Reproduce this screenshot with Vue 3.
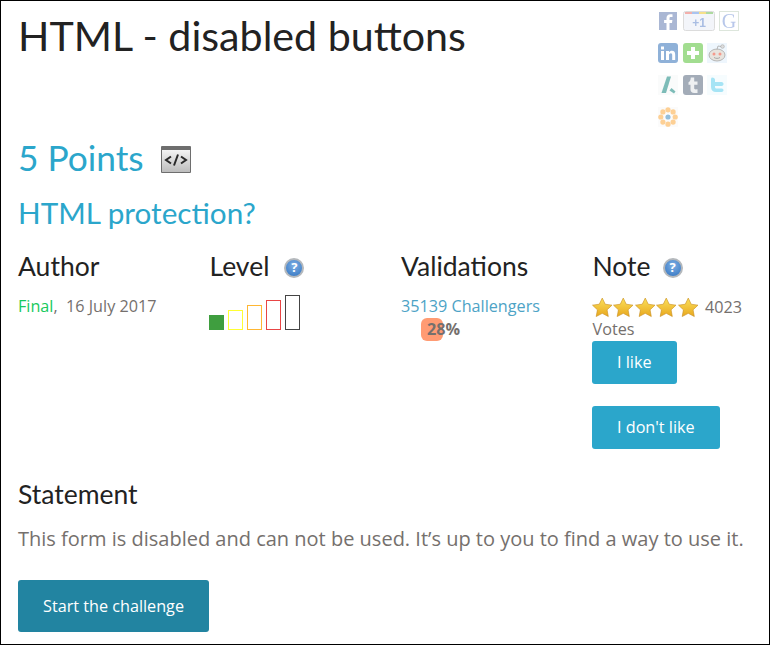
<script setup>
const columnsLevel = [
  { h: 20, c: "#ffff33" },
  { h: 25, c: "#ffb733" },
  { h: 30, c: "#e84545" },
  { h: 35, c: "#444" },
];
</script>

<template>
  <div class="page">
    <header class="top">
      <h1>HTML - disabled buttons</h1>
      <div class="share">
        <div class="share-row">
          <svg class="ic fb" viewBox="0 0 18 18"><rect width="18" height="18" fill="#aab7d4" /><path d="M10.500 18v-7h2.500l.4-3h-2.900V6.500c0-.9.3-1.400 1.500-1.400h1.500V2.400C13.200 2.300 12.300 2.300 11.400 2.300 9.100 2.300 7.500 3.600 7.500 6.100V8H5.100v3h2.400v7z" fill="#fff" /></svg>
          <svg class="plus" viewBox="0 0 32 20">
            <rect x=".5" y=".5" width="31" height="19" rx="2" fill="#f3f5fa" stroke="#dcdcdc" />
            <path d="M2 1h7v2H2z" fill="#f3b0ac" /><path d="M9 1h7v2H9z" fill="#a9c4f0" /><path d="M16 1h7v2h-7z" fill="#f6e08a" /><path d="M23 1h7v2h-7z" fill="#aedaa0" />
            <text x="16" y="15.500" class="plus-text">+1</text>
          </svg>
          <span class="g-box">G</span>
        </div>
        <div class="share-row">
          <svg class="ic wide" viewBox="0 0 20 20"><rect width="20" height="20" rx="3" fill="#8fb1d8" /><path d="M3 8h3v9H3zM3 3.500h3v3H3zM8 8h3v1.300C11.600 8.400 12.600 7.800 14 7.800c2.300 0 3.200 1.500 3.200 3.900V17h-3v-4.800c0-1.200-.4-1.900-1.400-1.900S11 11 11 12.200V17H8z" fill="#fff" /></svg>
          <svg class="ic wide" viewBox="0 0 20 20"><rect width="20" height="20" rx="3" fill="#a2dd90" /><path d="M8 4h4v4h4v4h-4v4H8v-4H4V8h4z" fill="#fff" /></svg>
          <svg class="ic wide" viewBox="0 0 20 20">
            <rect width="20" height="20" fill="#eef6fd" />
            <ellipse cx="10" cy="12" rx="8" ry="6" fill="#e8e4de" stroke="#a8a8a8" stroke-width=".8" />
            <circle cx="7" cy="11" r="1.500" fill="#f59a8c" /><circle cx="13" cy="11" r="1.500" fill="#f59a8c" />
            <circle cx="15.500" cy="3.500" r="1.800" fill="#ddd" stroke="#aaa" stroke-width=".6" />
            <path d="M10 6.500l1-3.500 3 .5" fill="none" stroke="#aaa" stroke-width=".8" />
            <path d="M7 14.500c2 1.200 4 1.200 6 0" fill="none" stroke="#999" stroke-width=".8" />
          </svg>
        </div>
        <div class="share-row">
          <svg class="ic wide" viewBox="0 0 20 20"><rect width="20" height="20" fill="#fafbfb" /><path d="M9 1.500h4L8 18H3.500z" fill="#7dbcb8" /><path d="M13.500 13l4 3.500L16 18.500l-4.500-3z" fill="#7dbcb8" /></svg>
          <svg class="ic wide" viewBox="0 0 20 20"><rect width="20" height="20" rx="3" fill="#a3acb8" /><path d="M7.800 2.500h3.400v4h3.300v3.300h-3.300v3.500c0 1 .8 1.300 3.300 1V18h-3.300c-2.400 0-3.700-1.300-3.700-3.500V9.800H5.500V7.200C6.800 6.800 7.600 5.500 7.800 2.500z" fill="#eef0f2" /></svg>
          <svg class="ic wide" viewBox="0 0 20 20"><rect width="20" height="20" fill="#f6fcfe" /><path d="M5 2.500c2 0 3 1 3 2.500v2h6.500c1.500 0 2 1 2 2s-.7 2-2 2H8v1c0 1.200.8 1.500 2 1.500h4.500c1.500 0 2 1 2 1.800s-.7 1.700-2 1.700H9c-3 0-5-1.800-5-5V5c0-1.200.3-2.500 1-2.500z" fill="#a6e4f5" /></svg>
        </div>
        <div class="share-row">
          <svg class="ic wide" viewBox="0 0 20 20">
            <rect width="20" height="20" fill="#fbfbfb" />
            <g fill="#fdd095">
              <circle cx="10" cy="2.800" r="2.600" /><circle cx="10" cy="17.200" r="2.600" /><circle cx="2.800" cy="10" r="2.600" /><circle cx="17.200" cy="10" r="2.600" />
              <circle cx="4.900" cy="4.900" r="2.600" /><circle cx="15.100" cy="4.900" r="2.600" /><circle cx="4.900" cy="15.100" r="2.600" /><circle cx="15.100" cy="15.100" r="2.600" />
            </g>
            <circle cx="10" cy="10" r="3.300" fill="#fff" />
            <circle cx="10" cy="10" r="2.600" fill="#93bedb" />
          </svg>
        </div>
      </div>
    </header>

    <div class="points">
      <h2>5 Points</h2>
      <svg class="code-ic" viewBox="0 0 30 27">
        <defs>
          <linearGradient id="win" x1="0" y1="0" x2="0" y2="1">
            <stop offset="0" stop-color="#f4f4f4" />
            <stop offset="1" stop-color="#bdbdbd" />
          </linearGradient>
        </defs>
        <rect width="30" height="27" rx="1" fill="#6e6e6e" />
        <rect x="1" y="4" width="28" height="22" fill="url(#win)" />
        <path d="M10 10.500l-5 3.500 5 3.500M20 10.500l5 3.500-5 3.500M17 8.500l-4 11" fill="none" stroke="#2a2a2a" stroke-width="2" />
      </svg>
    </div>
    <h3>HTML protection?</h3>

    <div class="cols">
      <section>
        <h4>Author</h4>
        <p class="text"><span class="final">Final</span>,&nbsp; 16 July 2017</p>
      </section>
      <section>
        <h4>Level <span class="help">?</span></h4>
        <div class="bars">
          <span class="bar first"></span>
          <span
            v-for="b in columnsLevel"
            :key="b.h"
            class="bar"
            :style="{ height: b.h + 'px', borderColor: b.c }"
          ></span>
        </div>
      </section>
      <section>
        <h4>Validations</h4>
        <p class="text link">35139 Challengers</p>
        <div class="pct"><span class="pct-bg"></span><b>28%</b></div>
      </section>
      <section>
        <h4 class="note-title">Note <span class="help">?</span></h4>
        <div class="votes">
          <svg v-for="n in 5" :key="n" class="star" viewBox="0 0 20 20">
            <defs>
              <linearGradient :id="'star' + n" x1="0" y1="0" x2="0" y2="1">
                <stop offset="0" stop-color="#fbe05a" />
                <stop offset="1" stop-color="#e8a81f" />
              </linearGradient>
            </defs>
            <path d="M10 .8l2.900 6 6.600.9-4.800 4.600 1.200 6.500L10 15.700l-5.900 3.100 1.200-6.500L.5 7.700l6.600-.9z" :fill="'url(#star' + n + ')'" stroke="#c98f1e" stroke-width=".6" stroke-linejoin="round" />
          </svg>
          <span class="count">4023</span>
          <span class="votes-label">Votes</span>
        </div>
        <a class="btn like">I like</a>
        <a class="btn dislike">I don't like</a>
      </section>
    </div>

    <h5>Statement</h5>
    <p class="statement">This form is disabled and can not be used. It’s up to you to find a way to use it.</p>
    <a class="start">Start the challenge</a>
  </div>
</template>

<style scoped>
.page {
  box-sizing: border-box;
  width: 770px;
  height: 645px;
  border: 1px solid #000;
  padding: 0 0 0 17px;
  overflow: hidden;
  font-family: "Open Sans", "Noto Sans", sans-serif;
  color: #75706d;
  background: #fff;
}

.top {
  display: flex;
  justify-content: space-between;
  height: 134px;
}

h1 {
  margin: 9px 0 0;
  font-family: Lato, "Noto Sans", sans-serif;
  font-weight: 400;
  font-size: 41.200px;
  line-height: 50px;
  color: #222;
}

.share {
  width: 111px;
  padding-top: 10px;
}

.share-row {
  display: flex;
  align-items: center;
  gap: 4.500px;
  height: 20px;
  margin-bottom: 12px;
  filter: blur(0.35px);
}

.ic {
  width: 18px;
  height: 18px;
}

.ic.fb {
  margin: 0 1.500px 0 1px;
}

.ic.wide {
  width: 20px;
  height: 20px;
}

.plus {
  width: 32px;
  height: 20px;
  margin-right: -.5px;
}

.plus-text {
  font-family: "Liberation Sans", sans-serif;
  font-size: 12px;
  font-weight: 700;
  fill: #a9bde3;
  text-anchor: middle;
}

.g-box {
  box-sizing: border-box;
  width: 20px;
  height: 20px;
  border: 1px solid #dde6dc;
  color: #b8c7ea;
  font-family: "Liberation Serif", serif;
  font-size: 20px;
  line-height: 18px;
  text-align: center;
}

.points {
  display: flex;
  align-items: center;
  gap: 17px;
  height: 46px;
}

h2 {
  margin: 0;
  font-family: Lato, "Noto Sans", sans-serif;
  font-weight: 400;
  font-size: 35.300px;
  line-height: 48px;
  color: #2ba6cb;
}

.code-ic {
  width: 30px;
  height: 27px;
  margin-top: 3px;
}

h3 {
  margin: 13px 0 0;
  font-family: Lato, "Noto Sans", sans-serif;
  font-weight: 400;
  font-size: 29.700px;
  line-height: 38px;
  color: #2ba6cb;
}

.cols {
  display: grid;
  grid-template-columns: repeat(4, 191.500px);
  margin-top: 16px;
}

h4 {
  display: flex;
  align-items: center;
  gap: 15px;
  margin: 0;
  font-family: Lato, "Noto Sans", sans-serif;
  font-weight: 400;
  font-size: 26.500px;
  line-height: 36px;
  color: #222;
}

.note-title {
  gap: 12px;
}

.help {
  display: inline-flex;
  align-items: center;
  justify-content: center;
  box-sizing: border-box;
  width: 20px;
  height: 20px;
  margin-top: 3px;
  border: 2px solid #b4b8bc;
  border-radius: 50%;
  background: radial-gradient(circle at 50% 35%, #7fb0e4, #2f72c0);
  color: #fff;
  font-family: "Open Sans", sans-serif;
  font-weight: 700;
  font-size: 13px;
  line-height: 1;
}

.text {
  margin: 11px 0 0;
  font-size: 16.200px;
  line-height: 23px;
}

.final {
  color: #17c95d;
}

.link {
  color: #4da3c6;
}

.bars {
  display: flex;
  align-items: flex-end;
  gap: 4px;
  height: 36px;
  margin-top: 10px;
  margin-left: -1px;
}

.bar {
  box-sizing: border-box;
  display: block;
  width: 15px;
  border: 1px solid;
}

.bar.first {
  height: 15px;
  background: #3f9e3f;
  border-color: #3f9e3f;
}

.pct {
  position: relative;
  height: 23px;
  padding-left: 26px;
  font-size: 16.200px;
  line-height: 23px;
}

.pct b {
  position: relative;
  color: #75706d;
}

.pct-bg {
  position: absolute;
  left: 20px;
  top: 0;
  width: 22px;
  height: 23px;
  border-radius: 6px;
  background: #ff9b73;
}

.votes {
  display: flex;
  flex-wrap: wrap;
  align-items: center;
  gap: 1px;
  width: 158px;
  margin: 12px 0 0 -1px;
  font-size: 16.200px;
  line-height: 23px;
}

.star {
  width: 20.500px;
  height: 21px;
}

.count {
  margin-left: 6px;
}

.votes-label {
  width: 100%;
  margin-top: -2px;
  padding-left: 1px;
}

.btn {
  display: block;
  width: fit-content;
  margin-left: -1px;
  padding: 0 25.500px;
  border-radius: 3px;
  background: #2ba6cb;
  color: #fff;
  font-size: 16.200px;
  line-height: 43px;
}

.dislike {
  margin-top: 22px;
}

h5 {
  margin: 28px 0 0;
  font-family: Lato, "Noto Sans", sans-serif;
  font-weight: 400;
  font-size: 26.500px;
  line-height: 34px;
  color: #222;
}

.statement {
  margin: 12px 0 0;
  font-size: 20px;
  line-height: 32px;
}

.start {
  display: block;
  width: fit-content;
  margin-top: 25px;
  padding: 0 25px;
  border-radius: 3px;
  background: #2284a1;
  color: #fff;
  font-size: 16.200px;
  line-height: 52px;
}
</style>
